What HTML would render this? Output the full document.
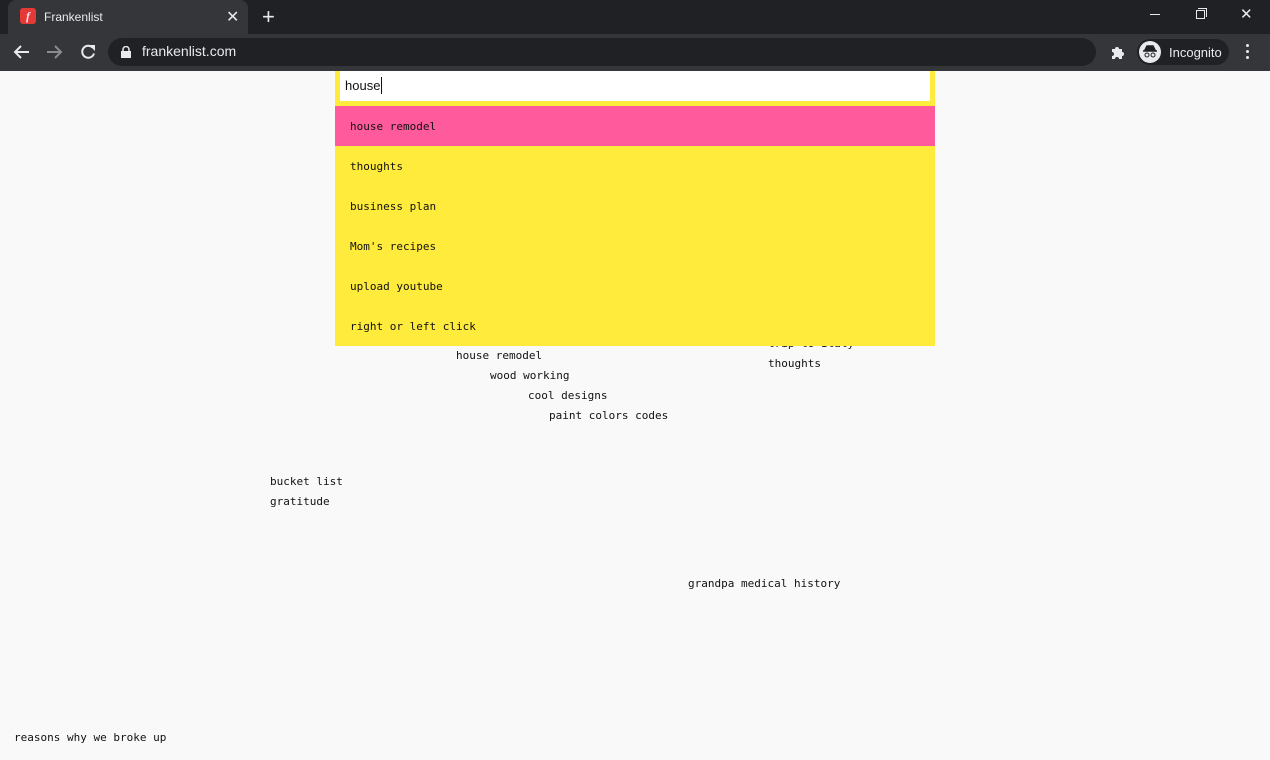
<!DOCTYPE html>
<html><head><meta charset="utf-8">
<style>
*{margin:0;padding:0;box-sizing:border-box}
body{width:1270px;height:760px;overflow:hidden;background:#f9f9f9;font-family:"Liberation Sans",sans-serif;position:relative}
.top{position:absolute;left:0;top:0;width:1270px;height:34px;background:#202124}
.tab{position:absolute;left:8px;top:0;width:240px;height:34px;background:#35363a;border-radius:8px 8px 0 0}
.bar{position:absolute;left:0;top:34px;width:1270px;height:37px;background:#35363a}
.url{position:absolute;left:108px;top:38px;width:988px;height:28px;background:#202124;border-radius:14px;color:#e8eaed;font-size:14px}
.m{font-family:"DejaVu Sans Mono","Liberation Mono",monospace;font-size:11px;color:#111;position:absolute;white-space:pre;line-height:14px}
.dd{position:absolute;left:335px;top:71px;width:600px;height:275px;background:#ffeb3b}
.inp{position:absolute;left:5px;top:0;width:590px;height:30px;background:#fff}
.row{position:absolute;left:0;width:600px;height:40px}
.row .m{left:15px;top:14px}
</style></head><body>
<div class="top"></div>
<div class="tab"></div>
<div style="position:absolute;left:20px;top:8px;width:16px;height:16px;background:#e53935;border-radius:3px;color:#fde;font:italic bold 12px 'Liberation Serif',serif;text-align:center;line-height:16px">f</div>
<div style="position:absolute;left:44px;top:10px;color:#e8eaed;font-size:12px">Frankenlist</div>
<div style="position:absolute;left:226px;top:7px;color:#e8eaed;font-size:16px">✕</div>
<div style="position:absolute;left:262px;top:4px;color:#e8eaed;font-size:22px;font-weight:300">+</div>
<div style="position:absolute;left:1150px;top:14px;width:10px;height:1px;background:#e8eaed"></div>
<div style="position:absolute;left:1196px;top:10px;width:9px;height:9px;border:1px solid #e8eaed"></div>
<div style="position:absolute;left:1198px;top:8px;width:9px;height:9px;border-top:1px solid #e8eaed;border-right:1px solid #e8eaed"></div>
<div style="position:absolute;left:1240px;top:5px;color:#e8eaed;font-size:15px">✕</div>
<div class="bar"></div>
<svg style="position:absolute;left:12px;top:43px" width="90" height="18" viewBox="0 0 90 18">
<path d="M17 9H3M9 3L3 9l6 6" stroke="#e8eaed" stroke-width="2" fill="none"/>
<path d="M35 9h14M43 3l6 6-6 6" stroke="#8a8b8d" stroke-width="2" fill="none"/>
<path d="M80.5 4.5a6 6 0 1 0 1.5 6" stroke="#e8eaed" stroke-width="2" fill="none" transform="translate(-0,0)"/><path d="M77 2h6v6z" fill="#e8eaed"/>
</svg>
<div class="url"><svg style="position:absolute;left:13px;top:8px" width="10" height="12"><rect x="0" y="5" width="10" height="7" fill="#e8eaed"/><path d="M2 5V3.5a3 3 0 0 1 6 0V5" stroke="#e8eaed" stroke-width="1.5" fill="none"/></svg><span style="position:absolute;left:34px;top:5px">frankenlist.com</span></div>
<svg style="position:absolute;left:1110px;top:44px" width="16" height="16" viewBox="0 0 16 16"><path d="M2 5h3a2 2 0 1 1 4 0h3v3a2 2 0 1 1 0 4v3H9a2 2 0 1 0-4 0H2v-3a2 2 0 1 0 0-4z" fill="#e8eaed"/></svg>
<div style="position:absolute;left:1137px;top:39px;width:92px;height:26px;background:#202124;border-radius:13px"></div>
<div style="position:absolute;left:1139px;top:41px;width:22px;height:22px;background:#e8eaed;border-radius:50%"></div>
<svg style="position:absolute;left:1142px;top:45px" width="16" height="14" viewBox="0 0 16 14"><path d="M3 5l2-4h6l2 4z M1 6h14" stroke="#202124" stroke-width="1.5" fill="#202124"/><circle cx="5" cy="10" r="2" stroke="#202124" fill="none"/><circle cx="11" cy="10" r="2" stroke="#202124" fill="none"/></svg>
<div style="position:absolute;left:1169px;top:45px;color:#e8eaed;font-size:13px">Incognito</div>
<div style="position:absolute;left:1246px;top:44px;width:3px;height:3px;background:#e8eaed;border-radius:50%;box-shadow:0 6px #e8eaed,0 12px #e8eaed"></div>

<div class="m" style="left:768px;top:337px">trip to Italy</div>
<div class="m" style="left:768px;top:357px">thoughts</div>
<div class="m" style="left:456px;top:349px">house remodel</div>
<div class="m" style="left:490px;top:369px">wood working</div>
<div class="m" style="left:528px;top:389px">cool designs</div>
<div class="m" style="left:549px;top:409px">paint colors codes</div>
<div class="m" style="left:270px;top:475px">bucket list</div>
<div class="m" style="left:270px;top:495px">gratitude</div>
<div class="m" style="left:688px;top:577px">grandpa medical history</div>
<div class="m" style="left:14px;top:731px">reasons why we broke up</div>

<div class="dd">
<div class="inp"><span style="position:absolute;left:5px;top:7px;font-size:13px;color:#111">house</span><span style="position:absolute;left:41px;top:6px;width:1px;height:17px;background:#111"></span></div>
<div class="row" style="top:35px;background:#ff5a9c"><span class="m">house remodel</span></div>
<div class="row" style="top:75px"><span class="m">thoughts</span></div>
<div class="row" style="top:115px"><span class="m">business plan</span></div>
<div class="row" style="top:155px"><span class="m">Mom's recipes</span></div>
<div class="row" style="top:195px"><span class="m">upload youtube</span></div>
<div class="row" style="top:235px"><span class="m">right or left click</span></div>
</div>
</body></html>
